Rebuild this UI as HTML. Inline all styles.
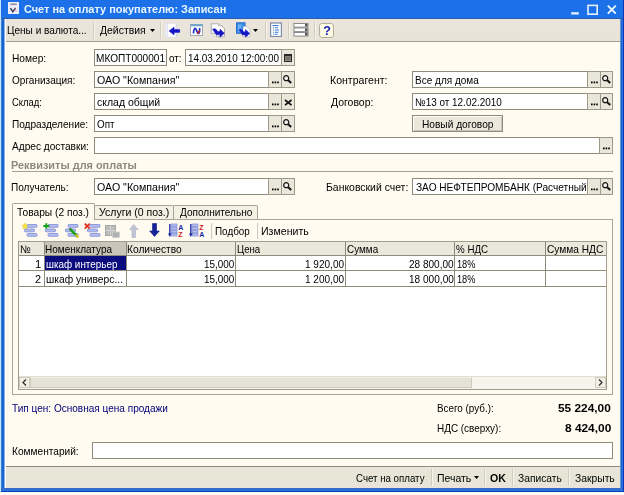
<!DOCTYPE html>
<html lang="ru">
<head>
<meta charset="utf-8">
<title>Счет на оплату покупателю: Записан</title>
<style>
*{box-sizing:border-box;margin:0;padding:0}
html,body{width:624px;height:495px;overflow:hidden;background:#1a64cc}
body{position:relative;font-family:"Liberation Sans","DejaVu Sans",sans-serif;font-size:11px;color:#000}
.a{position:absolute}
.t{position:absolute;white-space:nowrap;transform-origin:0 0;display:block}
#title{left:0;top:0;width:624px;height:19px;background:#1c71e8;border-bottom:1px solid #2b5ca6}
#tb{left:5px;top:19px;width:615px;height:23px;background:linear-gradient(#ece4dc,#e7e4d7);border-bottom:1px solid #a19e90}
#body{left:5px;top:42px;width:615px;height:424px;background:#fffbf0}
#bb{left:5px;top:466px;width:615px;height:22px;background:linear-gradient(#ece4dc,#e5e6d6 50%,#eae3da);border-top:1px solid #8f8c7f}
.in{background:#fff;border:1px solid #8e8b7d}
.bt{background:#e9e6da;border:1px solid #9d9a8b}
.sep{width:2px;border-left:1px solid #d0ccbe;border-right:1px solid #f6f4ec}
.tab{border:1px solid #a8a596;border-bottom:none;background:#f3f0e4;border-radius:2px 2px 0 0}
.th{background:#eae7db;border-right:1px solid #8e8b7d;border-bottom:1px solid #8e8b7d}
.td{background:#fff;border-right:1px solid #8e8b7d;border-bottom:1px solid #8e8b7d}
</style>
</head>
<body>
<div id="title" class="a"></div>
<div class="a" style="left:0;top:0;width:1px;height:492px;background:#c6e6fb;z-index:6"></div>
<div class="a" style="left:1px;top:19px;width:1px;height:473px;background:#3a7fe2;z-index:6"></div>
<div class="a" style="left:4px;top:19px;width:1px;height:469px;background:#8fb0e4;z-index:6"></div>
<div class="a" style="left:5px;top:19px;width:1px;height:469px;background:#fff;z-index:6"></div>
<div class="a" style="left:620px;top:19px;width:1px;height:469px;background:#6b98d8;z-index:6"></div>
<div class="a" style="left:622px;top:19px;width:1px;height:473px;background:#2d70e0;z-index:6"></div>
<div class="a" style="left:623px;top:0;width:1px;height:492px;background:#0838bc;z-index:6"></div>
<div class="a" style="left:1px;top:488px;width:622px;height:1px;background:#3d6cbc;z-index:6"></div>
<div class="a" style="left:1px;top:489px;width:622px;height:2px;background:#2a6fe0;z-index:6"></div>
<div class="a" style="left:1px;top:491px;width:622px;height:1px;background:#0a44b8;z-index:6"></div>
<div class="a" style="left:0;top:492px;width:624px;height:3px;background:#fdfbf5;z-index:7"></div>
<svg class="a" style="left:8px;top:2px" width="11" height="12" viewBox="0 0 11 12"><rect x="0" y="0" width="11" height="12" fill="#eeecf9"/><rect x="2.300" y="1.600" width="6.500" height="1.100" fill="#6c6c7a"/><path d="M2.500 6.200L4.800 9.800L7.500 5.800" stroke="#2e3350" stroke-width="1.400" fill="none"/><path d="M7 6.500L8.300 9.500" stroke="#d9a0b0" stroke-width="1"/></svg>
<svg class="a" style="left:566px;top:0" width="58" height="19" viewBox="0 0 58 19"><rect x="5.200" y="12.200" width="7.600" height="2.300" fill="#e6f2ff"/><rect x="22" y="5.400" width="9.200" height="8.800" fill="none" stroke="#e6f2ff" stroke-width="1.600"/><path d="M41.800 5.600 L49.800 13.600 M49.800 5.600 L41.800 13.600" stroke="#eef6ff" stroke-width="1.900"/></svg>

<div id="tb" class="a"></div>
<svg class="a" style="left:149.500px;top:29px" width="5" height="3" viewBox="0 0 5 3"><path d="M0 0h5l-2.500 3z" fill="#000"/></svg>
<div class="a sep" style="left:93px;top:22px;height:17px"></div>
<div class="a sep" style="left:160px;top:22px;height:17px"></div>
<div class="a sep" style="left:265px;top:22px;height:17px"></div>
<div class="a sep" style="left:288px;top:22px;height:17px"></div>
<div class="a sep" style="left:314px;top:22px;height:17px"></div>
<!-- toolbar icons -->
<svg class="a" style="left:165px;top:22px" width="16" height="16" viewBox="0 0 16 16"><rect x="0.500" y="1.500" width="11" height="13.500" fill="#fff" stroke="#e3e6f0"/><path d="M2.200 1.500v13.500M11.200 1.500v13.500" stroke="#c3cdf0" stroke-width="0.800"/><path d="M14.600 7.700H9V5.300L4.200 9L9 12.700V10.300H14.600z" fill="#1515c8" stroke="#1515c8" stroke-width="0.800" stroke-linejoin="round"/></svg>
<svg class="a" style="left:190px;top:24px" width="13" height="12" viewBox="0 0 13 12"><rect x="0.500" y="0.500" width="12" height="11" fill="#fff" stroke="#a3a8b4"/><rect x="0.500" y="0.300" width="12" height="2" fill="#6aa6cc"/><path d="M3.500 9.500C3.500 6 4.500 4 5.500 4.500S7 9.500 8.500 9.500S9.500 6 9.800 4" stroke="#2233c4" stroke-width="1.700" fill="none"/><path d="M7.300 9.800L9.600 6.500" stroke="#c81e1e" stroke-width="1.500"/></svg>
<svg class="a" style="left:210px;top:22px" width="16" height="16" viewBox="0 0 16 16"><rect x="1.300" y="1.800" width="7.500" height="9.500" fill="#fff" stroke="#adadb4"/><path d="M8.500 3.500h3l3 3v8.300h-8v-3" fill="#fff" stroke="#adadb4"/><path d="M2.500 7.500C4.500 6 6.500 7 7.500 9.500H10V7.200l4.300 4l-4.300 4V12.800H7C5.500 12.800 4.500 9 2.500 7.500z" fill="#1818c4" stroke="#1818c4" stroke-width="0.600" stroke-linejoin="round"/></svg>
<svg class="a" style="left:236px;top:22px" width="15" height="16" viewBox="0 0 15 16"><rect x="0.500" y="0.800" width="8.500" height="10.500" fill="#3a8de6" stroke="#2a6fd0"/><path d="M2 2.500h3.500v7H2z" fill="#7fc0f6" opacity="0.700"/><path d="M7.500 4.500h3.500l3 3v7.300h-7.500v-4" fill="#fff" stroke="#c4c4c8"/><path d="M3 7.800C5 6.500 6.500 7.500 7.500 9.800H9.500V7.600l4.200 3.800l-4.200 3.800V13H7C5.500 13 5 9.500 3 7.800z" fill="#1818c4" stroke="#1818c4" stroke-width="0.600" stroke-linejoin="round"/></svg>
<svg class="a" style="left:253px;top:29px" width="5" height="3" viewBox="0 0 5 3"><path d="M0 0h5l-2.500 3z" fill="#000"/></svg>
<svg class="a" style="left:270px;top:22px" width="12" height="15" viewBox="0 0 12 15"><rect x="0.600" y="1" width="10.800" height="13.500" fill="#fff" stroke="#7d8ba6" stroke-width="1.200"/><path d="M2.500 3.500h6M3 5.800h1M5 5.800h3M3 8h1M5 8h4M3 10.200h1M5 10.200h3.500M3 12.300h1M5 12.300h2.500" stroke="#3b78d6" stroke-width="1.100"/></svg>
<svg class="a" style="left:293px;top:23px" width="16" height="14" viewBox="0 0 16 14"><g fill="#fff" stroke="#8a8a8a"><rect x="1" y="0.500" width="14" height="3.600"/><rect x="1" y="5" width="14" height="3.600"/><rect x="1" y="9.500" width="14" height="3.600"/></g><g fill="#555"><rect x="12" y="1" width="2.500" height="2.500"/><rect x="12" y="5.500" width="2.500" height="2.500"/><rect x="12" y="10" width="2.500" height="2.500"/></g></svg>
<div class="a" style="left:319px;top:23px;width:15px;height:15px;background:#fdfbe4;border:1px solid #b3b0a2;border-radius:3px"></div>

<div id="body" class="a"></div>
<div class="a" style="left:12px;top:171px;width:601px;height:1px;background:#a3a093"></div>
<div class="a" style="left:412px;top:115px;width:91px;height:17px;background:#ebe8db;border:1px solid #8e8b7d;box-shadow:inset 1px 1px 0 #fff,inset -1px -1px 0 #c9c5b6"></div>
<div class="a in" style="left:94px;top:49px;width:73px;height:17px;"></div>
<div class="a in" style="left:185px;top:49px;width:97px;height:17px;"></div>
<div class="a bt" style="left:281px;top:49px;width:14px;height:17px;"><svg width="8" height="8" viewBox="0 0 8 8" style="position:absolute;left:2px;top:4px"><rect x="0" y="0" width="8" height="8" fill="#2a2a2a"/><rect x="1.200" y="2.200" width="5.600" height="4.800" fill="#b5b3aa"/><path d="M3.100 2.200v4.800M5 2.200v4.800M1.200 3.800h5.600M1.200 5.400h5.600" stroke="#444" stroke-width="0.600"/></svg></div>
<div class="a in" style="left:94px;top:71px;width:175px;height:17px;"></div>
<div class="a bt" style="left:268px;top:71px;width:14px;height:17px;"><svg width="8" height="3" viewBox="0 0 8 3" style="position:absolute;left:2.800px;bottom:3.500px"><rect x="0" y="0.500" width="1.600" height="1.800"/><rect x="2.600" y="0.500" width="1.600" height="1.800"/><rect x="5.200" y="0.500" width="1.600" height="1.800"/></svg></div>
<div class="a bt" style="left:281px;top:71px;width:14px;height:17px;"><svg width="11" height="11" viewBox="0 0 11 11" style="position:absolute;left:0px;top:2px"><circle cx="4.200" cy="4.200" r="2.500" fill="#f4f2ea" stroke="#111" stroke-width="1.200"/><path d="M6.200 6.200 L9.200 9.000" stroke="#111" stroke-width="2"/></svg></div>
<div class="a in" style="left:94px;top:93px;width:175px;height:17px;"></div>
<div class="a bt" style="left:268px;top:93px;width:14px;height:17px;"><svg width="8" height="3" viewBox="0 0 8 3" style="position:absolute;left:2.800px;bottom:3.500px"><rect x="0" y="0.500" width="1.600" height="1.800"/><rect x="2.600" y="0.500" width="1.600" height="1.800"/><rect x="5.200" y="0.500" width="1.600" height="1.800"/></svg></div>
<div class="a bt" style="left:281px;top:93px;width:14px;height:17px;"><svg width="9" height="8" viewBox="0 0 9 8" style="position:absolute;left:1.800px;top:4.800px"><path d="M1 1 L7.500 6.200 M7.500 1 L1 6.200" stroke="#111" stroke-width="1.700"/></svg></div>
<div class="a in" style="left:94px;top:115px;width:175px;height:17px;"></div>
<div class="a bt" style="left:268px;top:115px;width:14px;height:17px;"><svg width="8" height="3" viewBox="0 0 8 3" style="position:absolute;left:2.800px;bottom:3.500px"><rect x="0" y="0.500" width="1.600" height="1.800"/><rect x="2.600" y="0.500" width="1.600" height="1.800"/><rect x="5.200" y="0.500" width="1.600" height="1.800"/></svg></div>
<div class="a bt" style="left:281px;top:115px;width:14px;height:17px;"><svg width="11" height="11" viewBox="0 0 11 11" style="position:absolute;left:0px;top:2px"><circle cx="4.200" cy="4.200" r="2.500" fill="#f4f2ea" stroke="#111" stroke-width="1.200"/><path d="M6.200 6.200 L9.200 9.000" stroke="#111" stroke-width="2"/></svg></div>
<div class="a in" style="left:94px;top:178px;width:175px;height:17px;"></div>
<div class="a bt" style="left:268px;top:178px;width:14px;height:17px;"><svg width="8" height="3" viewBox="0 0 8 3" style="position:absolute;left:2.800px;bottom:3.500px"><rect x="0" y="0.500" width="1.600" height="1.800"/><rect x="2.600" y="0.500" width="1.600" height="1.800"/><rect x="5.200" y="0.500" width="1.600" height="1.800"/></svg></div>
<div class="a bt" style="left:281px;top:178px;width:14px;height:17px;"><svg width="11" height="11" viewBox="0 0 11 11" style="position:absolute;left:0px;top:2px"><circle cx="4.200" cy="4.200" r="2.500" fill="#f4f2ea" stroke="#111" stroke-width="1.200"/><path d="M6.200 6.200 L9.200 9.000" stroke="#111" stroke-width="2"/></svg></div>
<div class="a in" style="left:412px;top:71px;width:176px;height:17px;"></div>
<div class="a bt" style="left:587px;top:71px;width:14px;height:17px;"><svg width="8" height="3" viewBox="0 0 8 3" style="position:absolute;left:2.800px;bottom:3.500px"><rect x="0" y="0.500" width="1.600" height="1.800"/><rect x="2.600" y="0.500" width="1.600" height="1.800"/><rect x="5.200" y="0.500" width="1.600" height="1.800"/></svg></div>
<div class="a bt" style="left:600px;top:71px;width:13px;height:17px;"><svg width="11" height="11" viewBox="0 0 11 11" style="position:absolute;left:0px;top:2px"><circle cx="4.200" cy="4.200" r="2.500" fill="#f4f2ea" stroke="#111" stroke-width="1.200"/><path d="M6.200 6.200 L9.200 9.000" stroke="#111" stroke-width="2"/></svg></div>
<div class="a in" style="left:412px;top:93px;width:176px;height:17px;"></div>
<div class="a bt" style="left:587px;top:93px;width:14px;height:17px;"><svg width="8" height="3" viewBox="0 0 8 3" style="position:absolute;left:2.800px;bottom:3.500px"><rect x="0" y="0.500" width="1.600" height="1.800"/><rect x="2.600" y="0.500" width="1.600" height="1.800"/><rect x="5.200" y="0.500" width="1.600" height="1.800"/></svg></div>
<div class="a bt" style="left:600px;top:93px;width:13px;height:17px;"><svg width="11" height="11" viewBox="0 0 11 11" style="position:absolute;left:0px;top:2px"><circle cx="4.200" cy="4.200" r="2.500" fill="#f4f2ea" stroke="#111" stroke-width="1.200"/><path d="M6.200 6.200 L9.200 9.000" stroke="#111" stroke-width="2"/></svg></div>
<div class="a in" style="left:412px;top:178px;width:176px;height:17px;"></div>
<div class="a bt" style="left:587px;top:178px;width:14px;height:17px;"><svg width="8" height="3" viewBox="0 0 8 3" style="position:absolute;left:2.800px;bottom:3.500px"><rect x="0" y="0.500" width="1.600" height="1.800"/><rect x="2.600" y="0.500" width="1.600" height="1.800"/><rect x="5.200" y="0.500" width="1.600" height="1.800"/></svg></div>
<div class="a bt" style="left:600px;top:178px;width:13px;height:17px;"><svg width="11" height="11" viewBox="0 0 11 11" style="position:absolute;left:0px;top:2px"><circle cx="4.200" cy="4.200" r="2.500" fill="#f4f2ea" stroke="#111" stroke-width="1.200"/><path d="M6.200 6.200 L9.200 9.000" stroke="#111" stroke-width="2"/></svg></div>
<div class="a in" style="left:94px;top:137px;width:506px;height:17px;"></div>
<div class="a bt" style="left:599px;top:137px;width:14px;height:17px;"><svg width="8" height="3" viewBox="0 0 8 3" style="position:absolute;left:2.800px;bottom:3.500px"><rect x="0" y="0.500" width="1.600" height="1.800"/><rect x="2.600" y="0.500" width="1.600" height="1.800"/><rect x="5.200" y="0.500" width="1.600" height="1.800"/></svg></div>
<div class="a in" style="left:92px;top:442px;width:521px;height:17px;"></div>

<!-- tabs -->
<div class="a" style="left:12px;top:219px;width:601px;height:176px;border:1px solid #a8a596;background:#fffbf0"></div>
<div class="a tab" style="left:94px;top:205px;width:80px;height:14px"></div>
<div class="a tab" style="left:173px;top:205px;width:85px;height:14px"></div>
<div class="a tab" style="left:12px;top:203px;width:83px;height:17px;background:#fffbf0"></div>

<!-- table toolbar -->
<div class="a sep" style="left:211px;top:223px;height:16px"></div>
<div class="a sep" style="left:257px;top:223px;height:16px"></div>

<!-- table toolbar icons -->
<svg class="a" style="left:22px;top:223px" width="16" height="15" viewBox="0 0 16 15"><g fill="#b4bdf0" stroke="#7f8bd4" stroke-width="0.800"><rect x="5" y="1.500" width="10" height="2.800" rx="0.800"/><rect x="2.500" y="6" width="10" height="2.800" rx="0.800"/><rect x="5" y="10.500" width="10" height="2.800" rx="0.800"/></g><path d="M3 0.200l0.900 1.900l2 0.300l-1.500 1.400l0.400 2l-1.800-1l-1.800 1l0.400-2L0.100 2.400l2-0.300z" fill="#ffe93a" stroke="#d8b800" stroke-width="0.500"/></svg>
<svg class="a" style="left:43px;top:223px" width="16" height="15" viewBox="0 0 16 15"><g fill="#b4bdf0" stroke="#7f8bd4" stroke-width="0.800"><rect x="5" y="1.500" width="10" height="2.800" rx="0.800"/><rect x="2.500" y="6" width="10" height="2.800" rx="0.800"/><rect x="5" y="10.500" width="10" height="2.800" rx="0.800"/></g><path d="M0.300 3h6M3.300 0.200v5.600" stroke="#12a012" stroke-width="1.800"/></svg>
<svg class="a" style="left:64px;top:223px" width="16" height="15" viewBox="0 0 16 15"><g fill="#b4bdf0" stroke="#7f8bd4" stroke-width="0.800"><rect x="4" y="1.500" width="10" height="2.800" rx="0.800"/><rect x="1.500" y="6" width="10" height="2.800" rx="0.800"/><rect x="4" y="10.500" width="10" height="2.800" rx="0.800"/></g><path d="M6.500 6.500l6.500 6.500" stroke="#1fa51f" stroke-width="2.600" stroke-linecap="round"/><path d="M5.300 5.300l1.800 0.600l-1.200 1.200z" fill="#333"/><path d="M12.300 12.300l1.500 1.500" stroke="#e8c020" stroke-width="2.200" stroke-linecap="round"/></svg>
<svg class="a" style="left:84px;top:223px" width="17" height="15" viewBox="0 0 17 15"><g fill="#b4bdf0" stroke="#7f8bd4" stroke-width="0.800"><rect x="6" y="1.500" width="10" height="2.800" rx="0.800"/><rect x="3.500" y="6" width="10" height="2.800" rx="0.800"/><rect x="6" y="10.500" width="10" height="2.800" rx="0.800"/></g><path d="M0.700 0.700l5 5M5.700 0.700l-5 5" stroke="#e02a1a" stroke-width="1.700"/></svg>
<svg class="a" style="left:105px;top:225px" width="15" height="13" viewBox="0 0 15 13"><rect x="0.500" y="0.500" width="10" height="10" fill="#bdbdbd" stroke="#a6a6a6"/><path d="M0.500 5.500h10M5.500 0.500v10" stroke="#d4d4d4" stroke-width="0.800"/><rect x="7.500" y="7" width="7" height="5.500" fill="#b0b0b0" stroke="#cfcfcf" stroke-width="0.800"/></svg>
<svg class="a" style="left:129px;top:224px" width="10" height="14" viewBox="0 0 10 14"><path d="M4.700 0.500L9 5.500H6.500V13.500H3V5.500H0.500z" fill="#bfc4d6" stroke="#a9aec4" stroke-width="0.600"/></svg>
<svg class="a" style="left:149px;top:223px" width="11" height="14" viewBox="0 0 11 14"><path d="M5.500 13.500L10.300 8H7.500V0.500H3.500V8H0.700z" fill="#15239a" stroke="#0f1a80" stroke-width="0.600"/></svg>
<svg class="a" style="left:168px;top:223px" width="16" height="15" viewBox="0 0 16 15"><g fill="#b4bdf0" stroke="#7f8bd4" stroke-width="0.700"><rect x="3" y="1" width="6" height="2.400"/><rect x="3" y="4.200" width="6" height="2.400"/><rect x="3" y="7.400" width="6" height="2.400"/><rect x="3" y="10.600" width="6" height="2.400"/></g><path d="M1.800 1v11" stroke="#1a2aa0" stroke-width="1.300"/><path d="M0 10.500h3.600L1.800 14z" fill="#1a2aa0"/><text x="10.200" y="6.500" font-family="Liberation Sans,sans-serif" font-size="7" font-weight="bold" fill="#1a2aa0">A</text><text x="10.300" y="14" font-family="Liberation Sans,sans-serif" font-size="7" font-weight="bold" fill="#cc1e1e">Z</text></svg>
<svg class="a" style="left:189px;top:223px" width="16" height="15" viewBox="0 0 16 15"><g fill="#b4bdf0" stroke="#7f8bd4" stroke-width="0.700"><rect x="3" y="1" width="6" height="2.400"/><rect x="3" y="4.200" width="6" height="2.400"/><rect x="3" y="7.400" width="6" height="2.400"/><rect x="3" y="10.600" width="6" height="2.400"/></g><path d="M1.800 1v11" stroke="#1a2aa0" stroke-width="1.300"/><path d="M0 10.500h3.600L1.800 14z" fill="#1a2aa0"/><text x="10.300" y="6.500" font-family="Liberation Sans,sans-serif" font-size="7" font-weight="bold" fill="#cc1e1e">Z</text><text x="10.200" y="14" font-family="Liberation Sans,sans-serif" font-size="7" font-weight="bold" fill="#1a2aa0">A</text></svg>


<!-- table -->
<div class="a" style="left:18px;top:241px;width:589px;height:149px;background:#fff;border:1px solid #a09d8f"></div>
<div class="a th" style="left:19px;top:242px;width:26px;height:14px"></div>
<div class="a th" style="left:45px;top:242px;width:82px;height:14px;background:#c9c6b9"></div>
<div class="a th" style="left:127px;top:242px;width:109px;height:14px"></div>
<div class="a th" style="left:236px;top:242px;width:110px;height:14px"></div>
<div class="a th" style="left:346px;top:242px;width:109px;height:14px"></div>
<div class="a th" style="left:455px;top:242px;width:91px;height:14px"></div>
<div class="a th" style="left:546px;top:242px;width:60px;height:14px;border-right:none"></div>
<div class="a td" style="left:19px;top:256px;width:26px;height:15px"></div>
<div class="a td" style="left:45px;top:256px;width:82px;height:15px;background:#0b0b80"></div>
<div class="a td" style="left:127px;top:256px;width:109px;height:15px"></div>
<div class="a td" style="left:236px;top:256px;width:110px;height:15px"></div>
<div class="a td" style="left:346px;top:256px;width:109px;height:15px"></div>
<div class="a td" style="left:455px;top:256px;width:91px;height:15px"></div>
<div class="a td" style="left:546px;top:256px;width:60px;height:15px;border-right:none"></div>
<div class="a td" style="left:19px;top:271px;width:26px;height:16px"></div>
<div class="a td" style="left:45px;top:271px;width:82px;height:16px"></div>
<div class="a td" style="left:127px;top:271px;width:109px;height:16px"></div>
<div class="a td" style="left:236px;top:271px;width:110px;height:16px"></div>
<div class="a td" style="left:346px;top:271px;width:109px;height:16px"></div>
<div class="a td" style="left:455px;top:271px;width:91px;height:16px"></div>
<div class="a td" style="left:546px;top:271px;width:60px;height:16px;border-right:none"></div>
<!-- scrollbar -->
<div class="a" style="left:19px;top:376px;width:587px;height:13px;background:#f6f4ec;border-top:1px solid #e2dfd2"></div>
<div class="a" style="left:19px;top:377px;width:11px;height:11px;background:#f1efe6;border:1px solid #cfccbe"></div>
<div class="a" style="left:30px;top:377px;width:442px;height:11px;background:#e5e2d6;border:1px solid #cfccbe;border-top-color:#f2f0e8"></div>
<div class="a" style="left:595px;top:377px;width:11px;height:11px;background:#f1efe6;border:1px solid #cfccbe"></div>
<svg class="a" style="left:22px;top:379px" width="5" height="7" viewBox="0 0 5 7"><path d="M4 0.500L1 3.500L4 6.500" stroke="#333" stroke-width="1.300" fill="none"/></svg>
<svg class="a" style="left:598px;top:379px" width="5" height="7" viewBox="0 0 5 7"><path d="M1 0.500L4 3.500L1 6.500" stroke="#333" stroke-width="1.300" fill="none"/></svg>

<div id="bb" class="a"></div>
<div class="a sep" style="left:431px;top:469px;height:17px"></div>
<div class="a sep" style="left:484px;top:469px;height:17px"></div>
<div class="a sep" style="left:512px;top:469px;height:17px"></div>
<div class="a sep" style="left:568px;top:469px;height:17px"></div>
<svg class="a" style="left:473.500px;top:476px" width="5" height="3" viewBox="0 0 5 3"><path d="M0 0h5l-2.500 3z" fill="#000"/></svg>
<div id="txt" class="a" style="left:0;top:0;width:624px;height:492px;will-change:transform;filter:blur(0.35px)">
<span class="t" style="left:323.200px;top:23.500px;font-size:12.500px;line-height:14px;font-weight:bold;color:#1318b4">?</span>
<span class="t " style="left:23.86px;top:3.47px;font-size:11.3px;line-height:12.98px;transform:scaleX(0.9677);font-weight:bold;color:#eaf6ff">Счет на оплату покупателю: Записан</span>
<span class="t " style="left:7.19px;top:24.05px;font-size:11px;line-height:12.64px;transform:scaleX(0.9161)">Цены и валюта...</span>
<span class="t " style="left:100.00px;top:24.05px;font-size:11px;line-height:12.64px;transform:scaleX(0.9470)">Действия</span>
<span class="t " style="left:11.68px;top:52.05px;font-size:11px;line-height:12.64px;transform:scaleX(0.9262)">Номер:</span>
<span class="t " style="left:96.19px;top:52.05px;font-size:11px;line-height:12.64px;transform:scaleX(0.9165)">МКОПТ000001</span>
<span class="t " style="left:169.36px;top:52.05px;font-size:11px;line-height:12.64px;transform:scaleX(0.8971)">от:</span>
<span class="t " style="left:187.81px;top:52.05px;font-size:11px;line-height:12.64px;transform:scaleX(0.9021)">14.03.2010 12:00:00</span>
<span class="t " style="left:12.10px;top:74.30px;font-size:11px;line-height:12.64px;transform:scaleX(0.9120)">Организация:</span>
<span class="t " style="left:96.57px;top:74.30px;font-size:11px;line-height:12.64px;transform:scaleX(0.9660)">ОАО "Компания"</span>
<span class="t " style="left:329.91px;top:74.30px;font-size:11px;line-height:12.64px;transform:scaleX(0.9599)">Контрагент:</span>
<span class="t " style="left:414.70px;top:74.30px;font-size:11px;line-height:12.64px;transform:scaleX(0.9105)">Все для дома</span>
<span class="t " style="left:12.03px;top:96.30px;font-size:11px;line-height:12.64px;transform:scaleX(0.8551)">Склад:</span>
<span class="t " style="left:96.58px;top:96.30px;font-size:11px;line-height:12.64px;transform:scaleX(0.9537)">склад общий</span>
<span class="t " style="left:331.00px;top:96.30px;font-size:11px;line-height:12.64px;transform:scaleX(0.9503)">Договор:</span>
<span class="t " style="left:414.61px;top:96.30px;font-size:11px;line-height:12.64px;transform:scaleX(0.9028)">№13 от 12.02.2010</span>
<span class="t " style="left:11.69px;top:118.05px;font-size:11px;line-height:12.64px;transform:scaleX(0.9152)">Подразделение:</span>
<span class="t " style="left:96.61px;top:118.05px;font-size:11px;line-height:12.64px;transform:scaleX(0.8933)">Опт</span>
<span class="t " style="left:421.94px;top:117.55px;font-size:11px;line-height:12.64px;transform:scaleX(0.9229)">Новый договор</span>
<span class="t " style="left:12.00px;top:140.04px;font-size:11px;line-height:12.64px;transform:scaleX(0.9212)">Адрес доставки:</span>
<span class="t " style="left:11.35px;top:158.54px;font-size:11px;line-height:12.64px;transform:scaleX(0.9911);font-weight:bold;color:#8c897d">Реквизиты для оплаты</span>
<span class="t " style="left:11.20px;top:180.54px;font-size:11px;line-height:12.64px;transform:scaleX(0.9123)">Получатель:</span>
<span class="t " style="left:96.57px;top:180.54px;font-size:11px;line-height:12.64px;transform:scaleX(0.9660)">ОАО "Компания"</span>
<span class="t " style="left:326.17px;top:180.54px;font-size:11px;line-height:12.64px;transform:scaleX(0.9480)">Банковский счет:</span>
<div class="a" style="left:413px;top:179px;width:173.500px;height:15px;overflow:hidden"><span class="t" style="left:2.750px;top:1.54px;font-size:11px;line-height:12.640px;transform:scaleX(0.9197)">ЗАО НЕФТЕПРОМБАНК (Расчетный)</span></div>
<span class="t " style="left:17.30px;top:205.54px;font-size:11px;line-height:12.64px;transform:scaleX(0.9293)">Товары (2 поз.)</span>
<span class="t " style="left:99.29px;top:205.54px;font-size:11px;line-height:12.64px;transform:scaleX(0.9573)">Услуги (0 поз.)</span>
<span class="t " style="left:179.75px;top:205.54px;font-size:11px;line-height:12.64px;transform:scaleX(0.9142)">Дополнительно</span>
<span class="t " style="left:215.21px;top:224.54px;font-size:11px;line-height:12.64px;transform:scaleX(0.8998)">Подбор</span>
<span class="t " style="left:261.15px;top:224.54px;font-size:11px;line-height:12.64px;transform:scaleX(0.9629)">Изменить</span>
<span class="t " style="left:19.59px;top:242.54px;font-size:11px;line-height:12.64px;transform:scaleX(0.9188)">№</span>
<span class="t " style="left:45.45px;top:242.54px;font-size:11px;line-height:12.64px;transform:scaleX(0.9084)">Номенклатура</span>
<span class="t " style="left:126.68px;top:242.54px;font-size:11px;line-height:12.64px;transform:scaleX(0.9264)">Количество</span>
<span class="t " style="left:237.23px;top:242.54px;font-size:11px;line-height:12.64px;transform:scaleX(0.8779)">Цена</span>
<span class="t " style="left:346.50px;top:242.54px;font-size:11px;line-height:12.64px;transform:scaleX(0.9018)">Сумма</span>
<span class="t " style="left:456.21px;top:242.54px;font-size:11px;line-height:12.64px;transform:scaleX(0.8866)">% НДС</span>
<span class="t " style="left:546.99px;top:242.54px;font-size:11px;line-height:12.64px;transform:scaleX(0.9241)">Сумма НДС</span>
<span class="t " style="left:35.20px;top:257.55px;font-size:11px;line-height:12.64px;transform:scaleX(1.0331)">1</span>
<span class="t " style="left:46.41px;top:257.55px;font-size:11px;line-height:12.64px;transform:scaleX(0.8989);color:#fff">шкаф интерьер</span>
<span class="t " style="left:204.06px;top:257.55px;font-size:11px;line-height:12.64px;transform:scaleX(0.9014)">15,000</span>
<span class="t " style="left:305.30px;top:257.55px;font-size:11px;line-height:12.64px;transform:scaleX(0.9115)">1 920,00</span>
<span class="t " style="left:409.00px;top:257.55px;font-size:11px;line-height:12.64px;transform:scaleX(0.9122)">28 800,00</span>
<span class="t " style="left:456.86px;top:257.55px;font-size:11px;line-height:12.64px;transform:scaleX(0.8373)">18%</span>
<span class="t " style="left:35.46px;top:273.05px;font-size:11px;line-height:12.64px;transform:scaleX(0.9881)">2</span>
<span class="t " style="left:46.38px;top:273.05px;font-size:11px;line-height:12.64px;transform:scaleX(0.9338)">шкаф универс...</span>
<span class="t " style="left:204.06px;top:273.05px;font-size:11px;line-height:12.64px;transform:scaleX(0.9014)">15,000</span>
<span class="t " style="left:305.30px;top:273.05px;font-size:11px;line-height:12.64px;transform:scaleX(0.9115)">1 200,00</span>
<span class="t " style="left:408.79px;top:273.05px;font-size:11px;line-height:12.64px;transform:scaleX(0.9164)">18 000,00</span>
<span class="t " style="left:456.86px;top:273.05px;font-size:11px;line-height:12.64px;transform:scaleX(0.8373)">18%</span>
<span class="t " style="left:12.30px;top:402.05px;font-size:11px;line-height:12.64px;transform:scaleX(0.9132);color:#00007a">Тип цен: Основная цена продажи</span>
<span class="t " style="left:437.21px;top:402.05px;font-size:11px;line-height:12.64px;transform:scaleX(0.8961)">Всего (руб.):</span>
<span class="t " style="left:558.14px;top:402.05px;font-size:11px;line-height:12.64px;transform:scaleX(1.0793);font-weight:bold">55 224,00</span>
<span class="t " style="left:437.21px;top:422.05px;font-size:11px;line-height:12.64px;transform:scaleX(0.9019)">НДС (сверху):</span>
<span class="t " style="left:564.64px;top:422.05px;font-size:11px;line-height:12.64px;transform:scaleX(1.0800);font-weight:bold">8 424,00</span>
<span class="t " style="left:11.69px;top:444.80px;font-size:11px;line-height:12.64px;transform:scaleX(0.9219)">Комментарий:</span>
<span class="t " style="left:356.01px;top:471.55px;font-size:11px;line-height:12.64px;transform:scaleX(0.8819)">Счет на оплату</span>
<span class="t " style="left:437.16px;top:471.55px;font-size:11px;line-height:12.64px;transform:scaleX(0.9524)">Печать</span>
<span class="t " style="left:489.58px;top:471.55px;font-size:11px;line-height:12.64px;transform:scaleX(0.9651);font-weight:bold">OK</span>
<span class="t " style="left:518.44px;top:471.55px;font-size:11px;line-height:12.64px;transform:scaleX(0.9307)">Записать</span>
<span class="t " style="left:575.19px;top:471.55px;font-size:11px;line-height:12.64px;transform:scaleX(0.9380)">Закрыть</span>
</div>
</body>
</html>
